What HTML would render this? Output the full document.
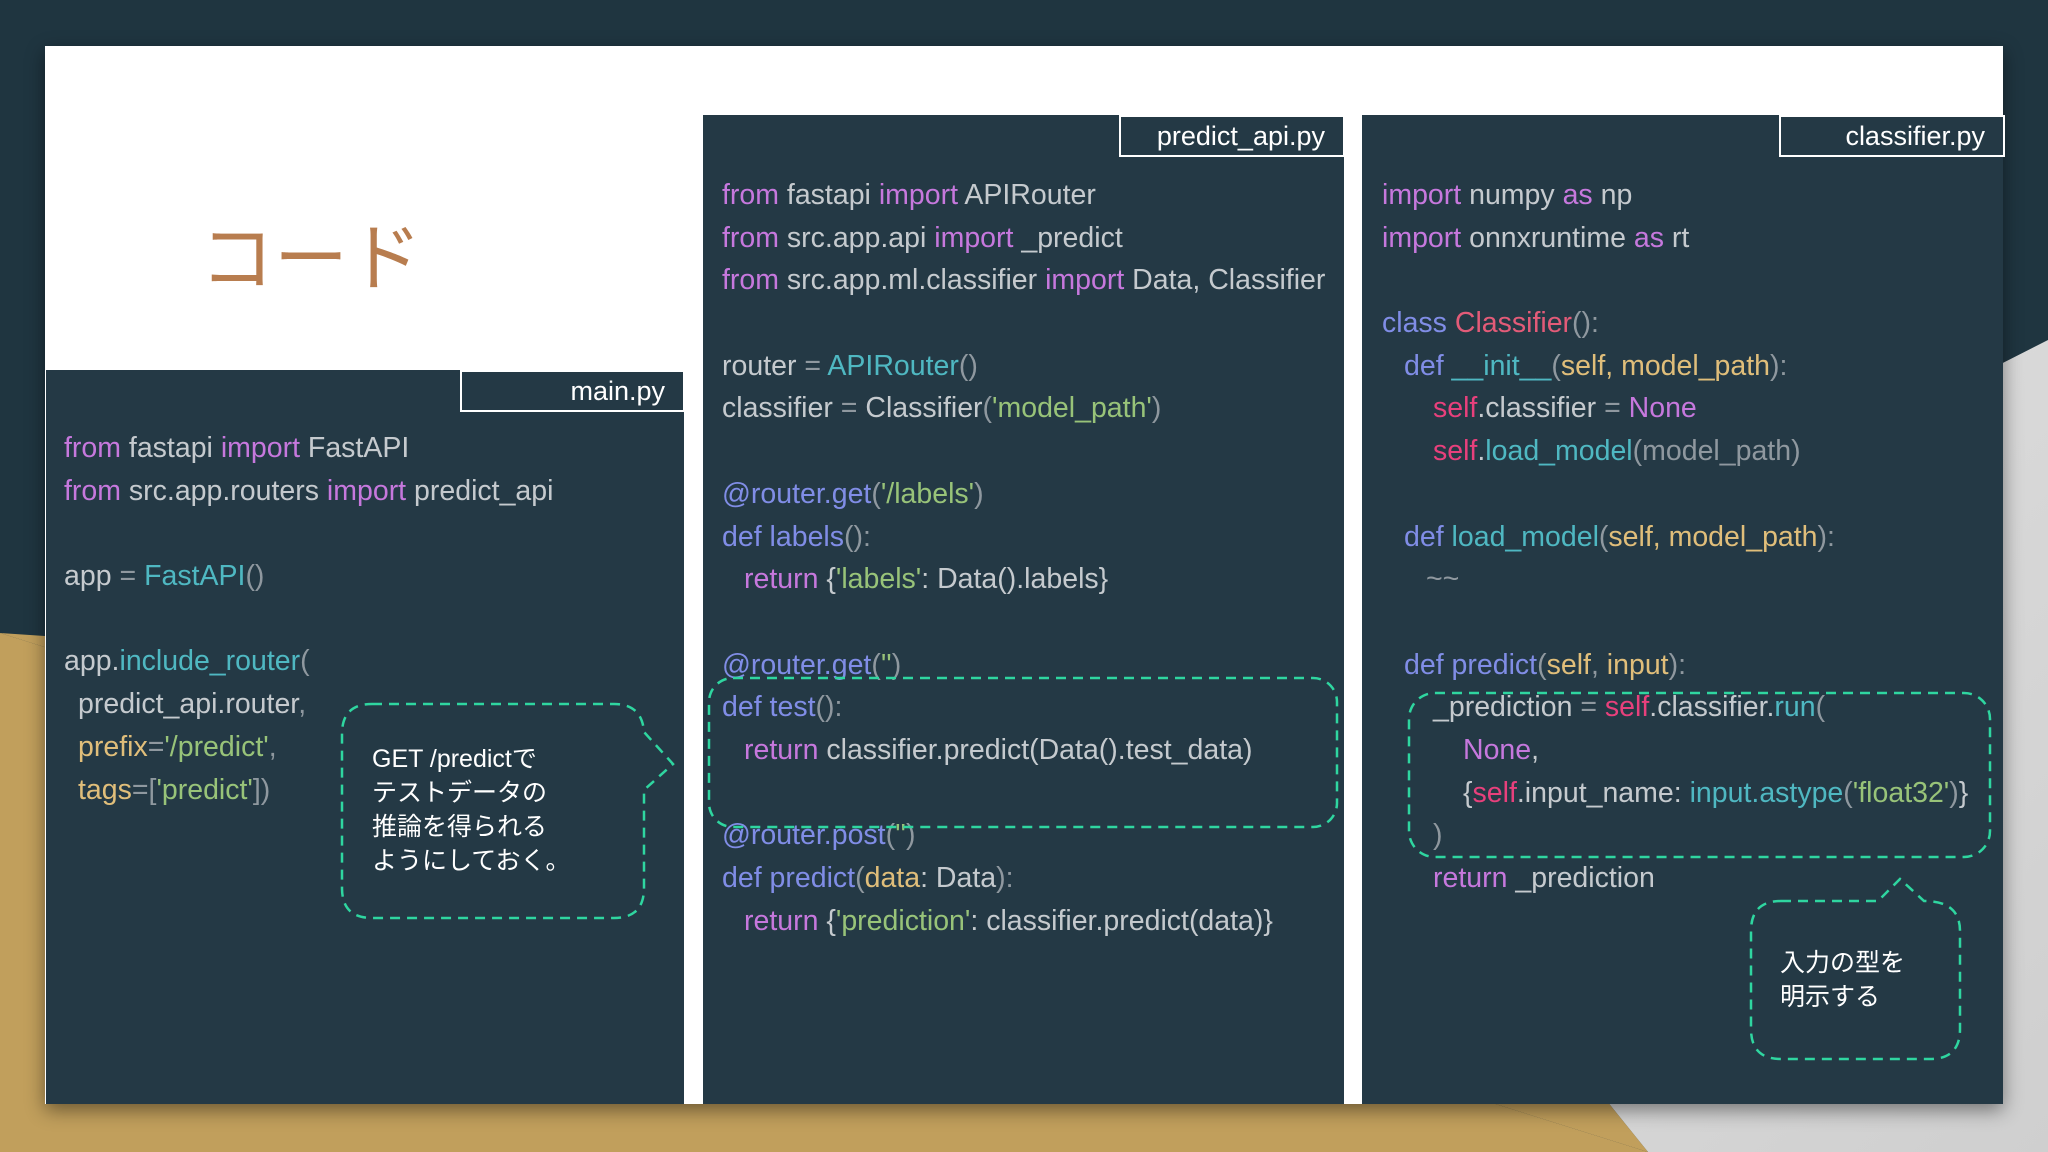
<!DOCTYPE html>
<html><head><meta charset="utf-8"><style>
*{margin:0;padding:0;box-sizing:border-box}
html,body{width:2048px;height:1152px;overflow:hidden}
body{background:#1f3540;position:relative;font-family:"Liberation Sans","Noto Sans CJK JP",sans-serif}
.abs{position:absolute}
.slide{left:45px;top:46px;width:1958px;height:1058px;background:#fff;box-shadow:0 6px 18px rgba(0,0,0,.45)}
.panel{position:absolute;background:#243945}
.tab{position:absolute;height:42px;border:2px solid #fff;background:#243945;color:#fff;font-size:27px;text-align:right;padding-right:18px;line-height:38px}
.code{position:absolute;font-size:28.5px;line-height:42.7px;color:#c5cace}
.code div{height:42.7px;white-space:pre}
.k{color:#c678dd}.t{color:#4fb8c2}.s{color:#98c379}.o{color:#e0be7a}.b{color:#808de6}.r{color:#e8407c}.c{color:#e35b78}.g{color:#8f989f}
.note{position:absolute;color:#fff;font-size:25px;line-height:34px}
</style></head><body>
<svg class="abs" style="left:0;top:0" width="2048" height="1152">
<defs><linearGradient id="gr" x1="0" y1="0" x2="1" y2="1"><stop offset="0" stop-color="#e2e2e2"/><stop offset="1" stop-color="#cfcfcf"/></linearGradient></defs>
<polygon points="2048,340 1300,720 1648,1152 2048,1152" fill="url(#gr)"/>
<polygon points="0,633 1648,1152 1300,720" fill="#c19f5c"/>
<polygon points="0,633 1648,1152 0,1152" fill="#c19f5c"/>
</svg>
<div class="abs slide"></div>
<div class="abs" style="left:200px;top:214px;font-size:74px;color:#b87d4f;line-height:90px">コード</div>

<div class="panel" style="left:46px;top:370px;width:638px;height:734px"></div>
<div class="panel" style="left:703px;top:115px;width:641px;height:989px"></div>
<div class="panel" style="left:1362px;top:115px;width:641px;height:989px"></div>

<div class="tab" style="left:460px;top:370px;width:225px">main.py</div>
<div class="tab" style="left:1119px;top:115px;width:226px">predict_api.py</div>
<div class="tab" style="left:1779px;top:115px;width:226px">classifier.py</div>

<div class="code" style="left:64px;top:427px"><div><span class="k">from</span> fastapi <span class="k">import</span> FastAPI</div><div><span class="k">from</span> src.app.routers <span class="k">import</span> predict_api</div><div></div><div>app <span class="g">=</span> <span class="t">FastAPI</span><span class="g">()</span></div><div></div><div>app.<span class="t">include_router</span><span class="g">(</span></div><div style="padding-left:14px">predict_api.router<span class="g">,</span></div><div style="padding-left:14px"><span class="o">prefix</span><span class="g">=</span><span class="s">'/predict'</span><span class="g">,</span></div><div style="padding-left:14px"><span class="o">tags</span><span class="g">=[</span><span class="s">'predict'</span><span class="g">])</span></div></div>

<div class="code" style="left:722px;top:174px"><div><span class="k">from</span> fastapi <span class="k">import</span> APIRouter</div><div><span class="k">from</span> src.app.api <span class="k">import</span> _predict</div><div><span class="k">from</span> src.app.ml.classifier <span class="k">import</span> Data, Classifier</div><div></div><div>router <span class="g">=</span> <span class="t">APIRouter</span><span class="g">()</span></div><div>classifier <span class="g">=</span> Classifier<span class="g">(</span><span class="s">'model_path'</span><span class="g">)</span></div><div></div><div><span class="b">@router.get</span><span class="g">(</span><span class="s">'/labels'</span><span class="g">)</span></div><div><span class="b">def</span> <span class="b">labels</span><span class="g">():</span></div><div style="padding-left:22px"><span class="k">return</span> {<span class="s">'labels'</span>: Data().labels}</div><div></div><div><span class="b">@router.get</span><span class="g">(</span><span class="s">''</span><span class="g">)</span></div><div><span class="b">def</span> <span class="b">test</span><span class="g">():</span></div><div style="padding-left:22px"><span class="k">return</span> classifier.predict(Data().test_data)</div><div></div><div><span class="b">@router.post</span><span class="g">(</span><span class="s">''</span><span class="g">)</span></div><div><span class="b">def</span> <span class="b">predict</span><span class="g">(</span><span class="o">data</span>: Data<span class="g">):</span></div><div style="padding-left:22px"><span class="k">return</span> {<span class="s">'prediction'</span>: classifier.predict(data)}</div></div>

<div class="code" style="left:1382px;top:174px"><div><span class="k">import</span> numpy <span class="k">as</span> np</div><div><span class="k">import</span> onnxruntime <span class="k">as</span> rt</div><div></div><div><span class="b">class</span> <span class="c">Classifier</span><span class="g">():</span></div><div style="padding-left:22px"><span class="b">def</span> <span class="t">__init__</span><span class="g">(</span><span class="o">self, model_path</span><span class="g">):</span></div><div style="padding-left:51px"><span class="r">self</span>.classifier <span class="g">=</span> <span class="k">None</span></div><div style="padding-left:51px"><span class="r">self</span>.<span class="t">load_model</span><span class="g">(model_path)</span></div><div></div><div style="padding-left:22px"><span class="b">def</span> <span class="t">load_model</span><span class="g">(</span><span class="o">self, model_path</span><span class="g">):</span></div><div style="padding-left:44px"><span class="g">~~</span></div><div></div><div style="padding-left:22px"><span class="b">def</span> <span class="b">predict</span><span class="g">(</span><span class="o">self</span><span class="g">,</span> <span class="o">input</span><span class="g">):</span></div><div style="padding-left:51px">_prediction <span class="g">=</span> <span class="r">self</span>.classifier.<span class="t">run</span><span class="g">(</span></div><div style="padding-left:81px"><span class="k">None</span>,</div><div style="padding-left:81px">{<span class="r">self</span>.input_name: <span class="t">input.astype</span><span class="g">(</span><span class="s">'float32'</span><span class="g">)</span>}</div><div style="padding-left:51px"><span class="g">)</span></div><div style="padding-left:51px"><span class="k">return</span> _prediction</div></div>

<svg class="abs" style="left:0;top:0" width="2048" height="1152" fill="none" stroke="#2fd6a0" stroke-width="2.5" stroke-dasharray="10 7">
<path d="M372,704 H614 Q642,704 644,732 L673,764 L644,790 V888 Q644,918 614,918 H372 Q342,918 342,888 V734 Q342,704 372,704 Z"/>
<rect x="709" y="678" width="628" height="149" rx="24"/>
<rect x="1409" y="693" width="581" height="164" rx="26"/>
<path d="M1781,901 H1878 L1900,879 L1924,901 Q1960,901 1960,931 V1029 Q1960,1059 1930,1059 H1781 Q1751,1059 1751,1029 V931 Q1751,901 1781,901 Z"/>
</svg>

<div class="note" style="left:372px;top:742px">GET /predictで<br>テストデータの<br>推論を得られる<br>ようにしておく。</div>
<div class="note" style="left:1780px;top:946px">入力の型を<br>明示する</div>
</body></html>
